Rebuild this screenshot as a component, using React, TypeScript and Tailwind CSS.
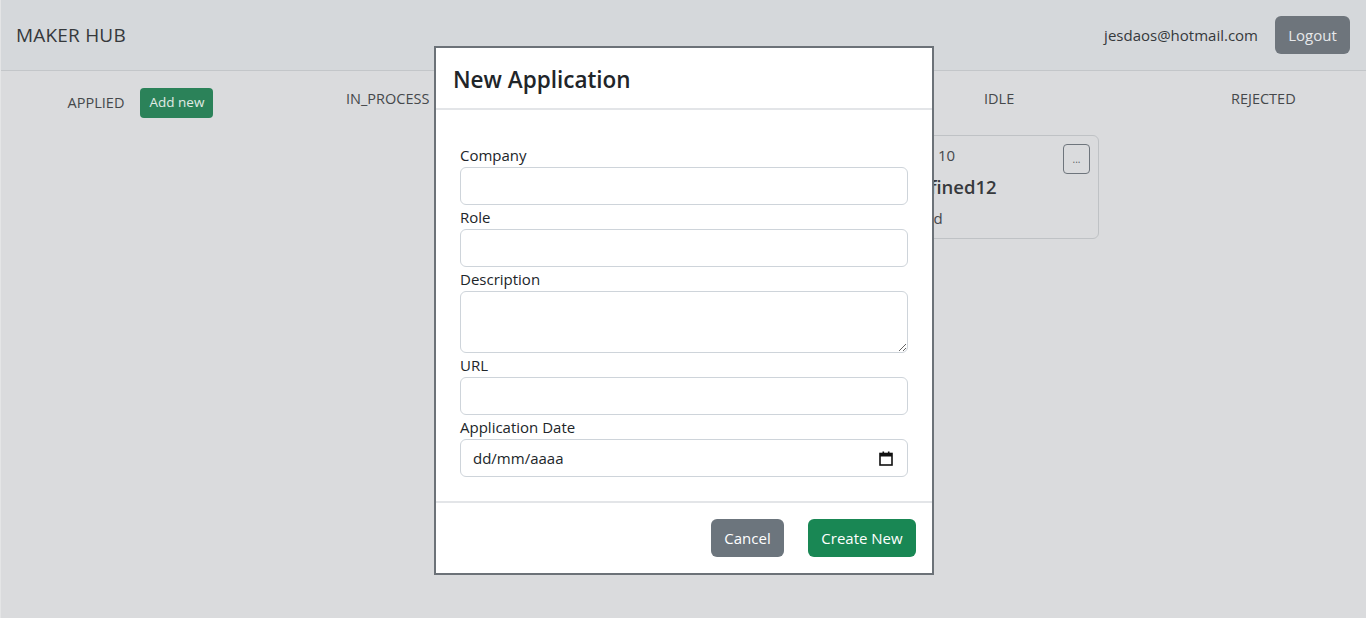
import React from "react";

const font = { fontFamily: '"Open Sans", "Noto Sans", sans-serif' };

function Field({ label, children }: { label: string; children: React.ReactNode }) {
  return (
    <div className="flex flex-col">
      <label className="h-[24px] leading-[24px] text-[15px] text-[#212529]">{label}</label>
      {children}
    </div>
  );
}

export default function App() {
  return (
    <div style={font} className="relative w-[1366px] h-[618px] overflow-hidden bg-[#dadbdd] border-l border-[#e4e5e6]">
      {/* Navbar */}
      <div className="h-[71px] flex items-center justify-between pl-[15px] pr-[16px] bg-[#d5d8db] border-b border-[#c3c6c9]">
        <div className="text-[19px] text-[#36393c] tracking-[0.2px]">MAKER HUB</div>
        <div className="flex items-center gap-[17px]">
          <span className="text-[15px] text-[#36393c]">jesdaos@hotmail.com</span>
          <button className="w-[75px] h-[38px] rounded-[6px] bg-[#6e757c] text-[#e6e8ea] text-[15px]">Logout</button>
        </div>
      </div>

      {/* Board */}
      <div className="flex pt-[16px]">
        <div className="w-[279px] flex justify-center items-center gap-[16px] h-[31px]">
          <span className="text-[14.5px] text-[#45484b]">APPLIED</span>
          <button className="w-[73px] h-[30px] rounded-[4px] bg-[#2b8259] text-[#e0ebe5] text-[13.5px]">Add new</button>
        </div>
        <div className="w-[224px] pl-[66px]">
          <div className="h-[24px] leading-[24px] text-[14.5px] text-[#45484b]">IN_PROCESS</div>
        </div>
        <div className="w-[347px]">
          <div className="h-[24px] leading-[24px] text-[14.5px] text-[#45484b] text-center">INTERVIEW</div>
        </div>
        <div className="w-[314px]">
          <div className="pl-[133px] h-[24px] leading-[24px] text-[14.5px] text-[#45484b]">IDLE</div>
          <div className="relative mt-[24px] ml-[4px] w-[244px] h-[104px] rounded-[6px] border border-[#bfc2c5] px-[15px] pt-[8px]">
            <div className="h-[22px] leading-[22px] text-[15px] text-[#45484b]">
              Applied:<span className="ml-[10px]">10</span>
            </div>
            <div className="mt-[9px] ml-[13px] h-[24px] leading-[24px] text-[18.5px] font-semibold text-[#36393c]">undefined12</div>
            <div className="mt-[7px] h-[24px] leading-[24px] text-[15px] text-[#45484b]">undefined</div>
            <button className="absolute right-[8px] top-[8px] w-[27px] h-[30px] rounded-[4px] border border-[#6e757c] text-[10px] text-[#5a5f64] leading-none">...</button>
          </div>
        </div>
        <div className="pl-[66px]">
          <div className="h-[24px] leading-[24px] text-[14.5px] text-[#45484b]">REJECTED</div>
        </div>
      </div>

      {/* Modal */}
      <div className="absolute left-[433px] top-[46px] w-[500px] h-[529px] bg-white border-2 border-[#6c7278] flex flex-col">
        <div className="h-[62px] flex items-center pl-[17px] pt-[4px] border-b-2 border-[#e3e5e8]">
          <h2 className="text-[22.5px] font-semibold text-[#212529]">New Application</h2>
        </div>
        <div className="h-[391px] pt-[33px] pb-[24px] pl-[24px] pr-[24px] flex flex-col">
          <Field label="Company">
            <input className="h-[38px] rounded-[6px] border border-[#ced4da] px-[12px] outline-none" />
          </Field>
          <Field label="Role">
            <input className="h-[38px] rounded-[6px] border border-[#ced4da] px-[12px] outline-none" />
          </Field>
          <Field label="Description">
            <textarea className="h-[62px] rounded-[6px] border border-[#ced4da] px-[12px] outline-none" />
          </Field>
          <Field label="URL">
            <input className="h-[38px] rounded-[6px] border border-[#ced4da] px-[12px] outline-none" />
          </Field>
          <Field label="Application Date">
            <div className="h-[38px] rounded-[6px] border border-[#ced4da] pl-[12px] pr-[14px] flex items-center justify-between">
              <span className="text-[15px] text-[#212529]">dd/mm/aaaa</span>
              <svg width="14" height="15" viewBox="0 0 14 15">
                <rect x="1" y="2.5" width="12" height="11.5" fill="none" stroke="#111" strokeWidth="1.6" />
                <rect x="1" y="2.5" width="12" height="3" fill="#111" />
                <rect x="3.5" y="0.5" width="1.6" height="3" fill="#111" />
                <rect x="8.9" y="0.5" width="1.6" height="3" fill="#111" />
              </svg>
            </div>
          </Field>
        </div>
        <div className="flex-1 border-t-2 border-[#e3e5e8] flex justify-end items-start pt-[16px] pr-[16px] gap-[24px]">
          <button className="w-[73px] h-[38px] rounded-[6px] bg-[#6c757d] text-white text-[15px]">Cancel</button>
          <button className="w-[108px] h-[38px] rounded-[6px] bg-[#198754] text-white text-[15px]">Create New</button>
        </div>
      </div>
    </div>
  );
}
